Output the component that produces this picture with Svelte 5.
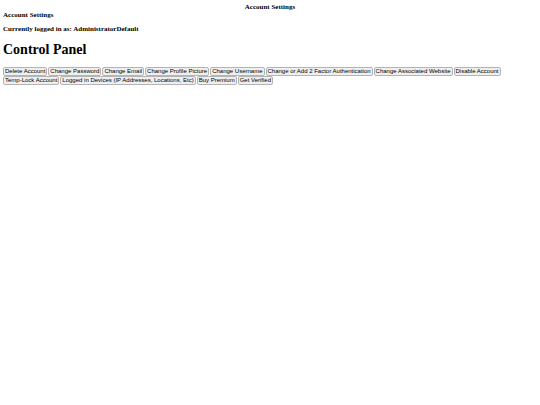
<script>
  const username = 'AdministratorDefault';

  const actions = [
    'Delete Account',
    'Change Password',
    'Change Email',
    'Change Profile Picture',
    'Change Username',
    'Change or Add 2 Factor Authentication',
    'Change Associated Website',
    'Disable Account',
    'Temp-Lock Account',
    'Logged in Devices (IP Addresses, Locations, Etc)',
    'Buy Premium',
    'Get Verified',
  ];
</script>

<svelte:head>
  <title>Account Settings</title>
</svelte:head>

<header>Account Settings</header>

<main>
  <h4>Account Settings</h4>
  <h4>Currently logged in as: {username}</h4>
  <h1>Control Panel</h1>

  <div class="actions">
    {#each actions as action}
      <button type="button">{action}</button>
    {/each}
  </div>
</main>

<style>
  :global(body) {
    margin: 0;
    background: #fff;
    color: #000;
    font-family: 'Liberation Serif', 'Times New Roman', serif;
  }

  header {
    padding-top: 3px;
    font-size: 7px;
    font-weight: bold;
    line-height: 8px;
    text-align: center;
  }

  main {
    padding: 0 3px;
  }

  h4 {
    margin: 0 0 6px;
    font-size: 7px;
    line-height: 8px;
  }

  h1 {
    margin: 9px 0;
    font-size: 14px;
    line-height: 16px;
  }

  .actions {
    display: flex;
    flex-wrap: wrap;
    column-gap: 1px;
  }

  button {
    padding: 0 1px;
    border: 1px solid #b4b4b4;
    border-radius: 2px;
    background: #efefef;
    color: #000;
    font-family: 'Liberation Sans', Arial, sans-serif;
    font-size: 6px;
    line-height: 7px;
  }
</style>
